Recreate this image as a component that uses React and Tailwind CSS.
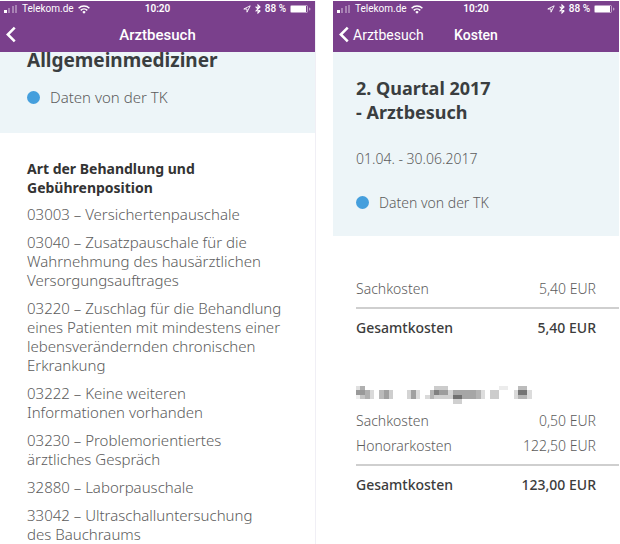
import React from 'react';

const positions = [
  '03003 – Versichertenpauschale',
  '03040 – Zusatzpauschale für die Wahrnehmung des hausärztlichen Versorgungsauftrages',
  '03220 – Zuschlag für die Behandlung eines Patienten mit mindestens einer lebensverändernden chronischen Erkrankung',
  '03222 – Keine weiteren Informationen\u00a0vorhanden',
  '03230 – Problemorientiertes ärztliches\u00a0Gespräch',
  '32880 – Laborpauschale',
  '33042 – Ultraschalluntersuchung des\u00a0Bauchraums',
];

// x, y, width, height, grey value of each block
const blocks = [
  [0, 0, 4, 4, '#e0e0e0'],
  [4, 0, 5, 4, '#b0b0b0'],
  [0, 4, 9, 5, '#999999'],
  [9, 4, 5, 9, '#b0b0b0'],
  [0, 9, 4, 4, '#eeeeee'],
  [4, 9, 5, 4, '#c4c4c4'],
  [14, 4, 4, 9, '#dadada'],
  [23, 4, 5, 9, '#bababa'],
  [28, 4, 5, 9, '#a0a0a0'],
  [33, 4, 4, 9, '#cecece'],
  [51, 4, 4, 9, '#d4d4d4'],
  [55, 4, 5, 9, '#a0a0a0'],
  [60, 4, 4, 9, '#dcdcdc'],
  [69, 9, 5, 4, '#dadada'],
  [74, 4, 4, 9, '#b4b4b4'],
  [78, 0, 14, 4, '#cccccc'],
  [78, 4, 5, 5, '#808080'],
  [83, 4, 9, 5, '#9c9c9c'],
  [78, 9, 19, 4, '#cfcfcf'],
  [92, 4, 5, 5, '#d4d4d4'],
  [97, 4, 23, 9, '#a6a6a6'],
  [97, 9, 9, 4, '#707070'],
  [97, 13, 9, 5, '#d0d0d0'],
  [120, 4, 5, 9, '#b4b4b4'],
  [125, 4, 4, 9, '#dddddd'],
  [134, 4, 9, 9, '#cccccc'],
  [143, 0, 9, 4, '#ececec'],
  [158, 4, 4, 9, '#d9d9d9'],
  [162, 0, 9, 4, '#bcbcbc'],
  [162, 4, 9, 5, '#747474'],
  [162, 9, 9, 4, '#b4b4b4'],
  [171, 4, 5, 9, '#dcdcdc'],
];

const StatusBar = () => (
  <div className="grid grid-cols-[1fr_auto_1fr] items-center h-4 px-1 text-[10px] leading-4 whitespace-nowrap">
    <div className="flex items-center gap-1">
      <svg width="14" height="8" viewBox="0 0 14 8" fill="white">
        <rect x="0" y="5" width="3" height="3" />
        <rect x="4" y="3" width="2" height="5" opacity="0.35" />
        <rect x="8" y="1" width="2" height="7" opacity="0.35" />
        <rect x="11" y="0" width="2" height="8" opacity="0.35" />
      </svg>
      <span>Telekom.de</span>
      <svg width="12" height="9" viewBox="0 0 12 9" fill="none" stroke="white" strokeWidth="1.5">
        <path d="M0.6 3.2a7.6 7.6 0 0 1 10.8 0" />
        <path d="M2.7 5.4a4.7 4.7 0 0 1 6.6 0" />
        <path d="M4.3 6.9a2.4 2.4 0 0 1 3.4 0L6 8.7z" fill="white" stroke="none" />
      </svg>
    </div>
    <span className="font-semibold">10:20</span>
    <div className="flex items-center justify-end gap-1">
      <svg width="8" height="8" viewBox="0 0 8 8" fill="none" stroke="white" strokeWidth="0.9">
        <path d="M7.2 0.8L0.8 4H4v3.2z" />
      </svg>
      <svg width="6" height="10" viewBox="0 0 6 10" fill="none" stroke="white" strokeWidth="1.1">
        <path d="M0.6 2.6L5 7 3 9V1l2 2L0.6 7.4" />
      </svg>
      <span className="font-medium">88 %</span>
      <svg width="21" height="8" viewBox="0 0 21 8" fill="white">
        <rect x="0.5" y="0.5" width="17" height="7" rx="1" fill="none" stroke="white" strokeOpacity="0.5" />
        <rect x="1" y="1" width="15" height="6" />
        <path d="M19 2.5a1.5 1.5 0 0 1 0 3z" opacity="0.5" />
      </svg>
    </div>
  </div>
);

const Header = ({ title, back }) => (
  <header className="relative z-10 bg-[#7a408c] font-[Roboto,sans-serif] font-normal text-white">
    <StatusBar />
    <div className="grid grid-cols-[1fr_auto_1fr] items-center h-[35px] px-1.5 leading-5">
      <button aria-label="Zurück" className="flex items-center gap-1 justify-self-start">
        <svg width="10" height="17" viewBox="0 0 11 18" fill="none" stroke="white" strokeWidth="2.8">
          <path d="M9.6 1.4L2 9l7.6 7.6" />
        </svg>
        {back}
      </button>
      <h1 className="font-medium">{title}</h1>
    </div>
  </header>
);

const Source = () => (
  <p className="flex items-center gap-2.5">
    <span className="size-[13px] rounded-full bg-[#459fdd]" />
    Daten von der TK
  </p>
);

const Costs = ({ rows, total }) => (
  <table className="w-full">
    <tbody className="leading-[25px]">
      {rows.map(([label, value]) => (
        <tr key={label} className="last:*:pb-1.5">
          <th scope="row" className="text-left font-light">{label}</th>
          <td className="pr-[23px] text-right">{value}</td>
        </tr>
      ))}
    </tbody>
    <tfoot>
      <tr className="h-[38px] border-t-2 border-[#cfcfcf] font-medium text-[#3c3c3c]">
        <th scope="row" className="text-left font-medium">Gesamtkosten</th>
        <td className="pr-[23px] text-right">{total}</td>
      </tr>
    </tfoot>
  </table>
);

const App = () => {
  return (
    <main className="grid min-h-screen grid-cols-[316fr_286fr] gap-[17px] bg-white pt-px pr-px font-['Noto_Sans',sans-serif] leading-[19px] font-light text-[#5c5c5c]">
      <section className="border-r border-[#f0eff5] text-[15px]">
        <Header title="Arztbesuch" />
        <div className="-mt-1 bg-[#edf5f8] px-[27px] pb-[26px]">
          <h2 className="mb-4 text-[19px] leading-6 font-bold text-[#3a3e40]">Allgemeinmediziner</h2>
          <Source />
        </div>
        <div className="pt-[26px] pr-7 pl-[27px]">
          <h3 className="mb-2 text-sm leading-[19px] font-bold text-[#333]">
            Art der Behandlung und<br />Gebührenposition
          </h3>
          <ul className="space-y-[9px]">
            {positions.map((text) => (
              <li key={text}>{text}</li>
            ))}
          </ul>
        </div>
      </section>

      <section className="text-sm leading-[19px]">
        <Header title="Kosten" back="Arztbesuch" />
        <div className="bg-[#edf5f8] pt-6 pr-4 pb-6 pl-[23px]">
          <h2 className="mb-[25px] text-lg leading-6 font-bold text-[#3a3e40]">
            2. Quartal 2017<br />- Arztbesuch
          </h2>
          <p className="mb-[25px]">01.04. - 30.06.2017</p>
          <Source />
        </div>
        <div className="pt-10 pl-[23px]">
          <Costs rows={[['Sachkosten', '5,40 EUR']]} total="5,40 EUR" />
          <svg className="mt-10 mb-1" width="176" height="18" viewBox="0 0 176 18" shapeRendering="crispEdges">
            {blocks.map(([x, y, w, h, fill]) => (
              <rect key={`${x}-${y}`} x={x} y={y} width={w} height={h} fill={fill} />
            ))}
          </svg>
          <Costs rows={[['Sachkosten', '0,50 EUR'], ['Honorarkosten', '122,50 EUR']]} total="123,00 EUR" />
        </div>
      </section>
    </main>
  );
};

export default App;
